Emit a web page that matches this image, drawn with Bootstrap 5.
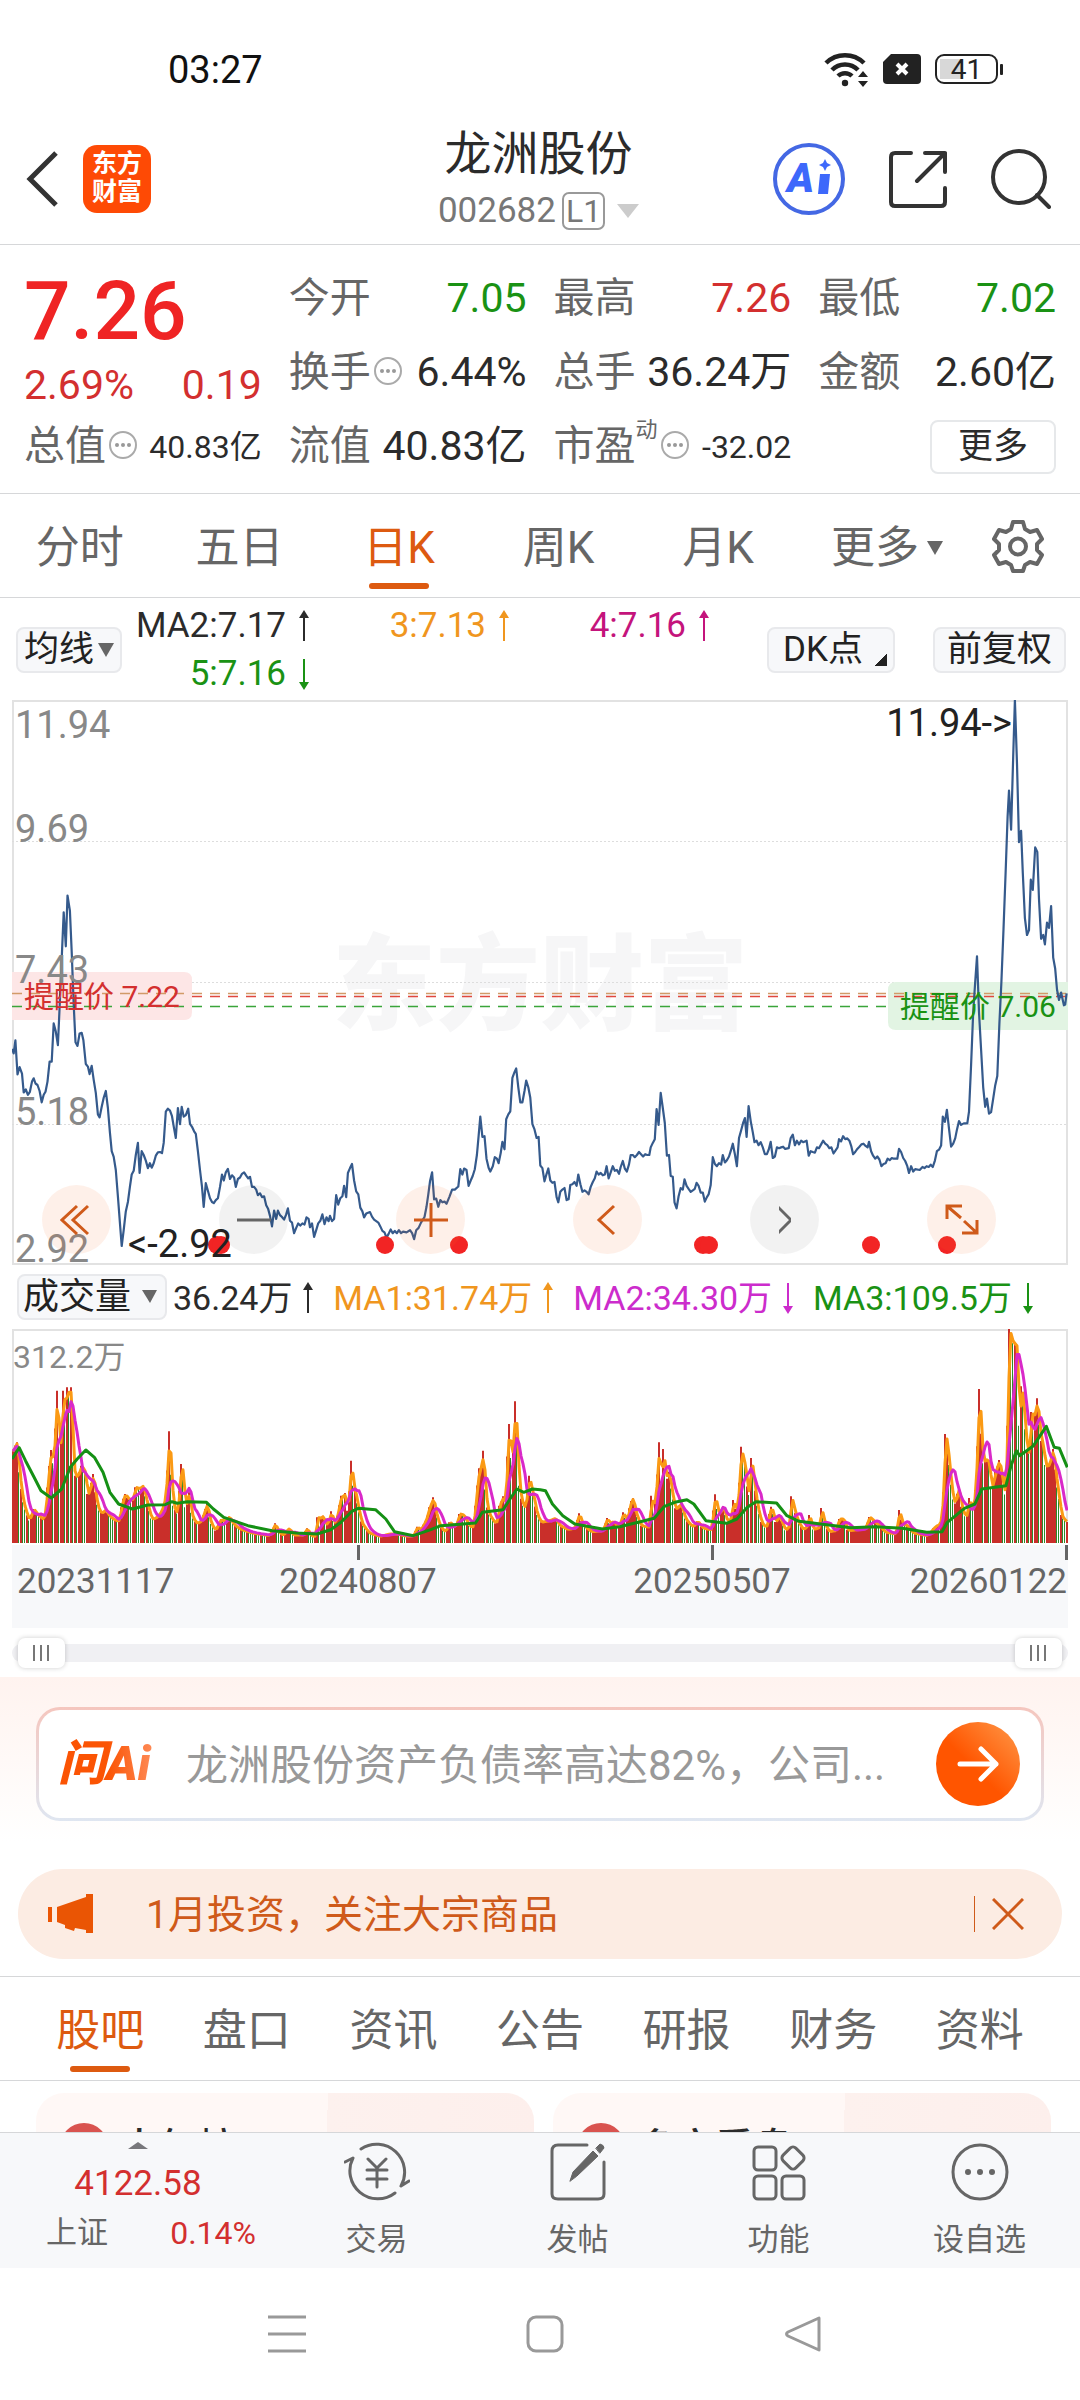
<!DOCTYPE html>
<html lang="zh-CN">
<head>
<meta charset="utf-8">
<meta name="viewport" content="width=device-width, initial-scale=1">
<title>龙洲股份 002682</title>
<link href="https://cdn.jsdelivr.net/npm/bootstrap@5.3.0/dist/css/bootstrap.min.css" rel="stylesheet">
<style>
  :root { --up:#d32f2f; --down:#1a9214; --accent:#dd5a10; --ink:#2b2b2b; --soft:#666; --rule:#d6d7d9; --panel:#f7f8fa; }
  body { font-family: Roboto, "Noto Sans CJK SC", sans-serif; color: var(--ink); background:#fff; overflow:hidden; }
  button, select { font-family: inherit; color: inherit; }
  svg { display:block; flex:none; }
  a { color: inherit; text-decoration:none; }
  .plain { border:0; background:none; padding:0; }
  .is-up { color: var(--up); } .is-down { color: var(--down); }
  .scroll-body { min-height:0; }

  .statusbar { height:112px; padding:48px 82px 0 168px; font-size:38px; line-height:44px; color:#111; }
  .status-icons { gap:14px; height:42px; }
  .battery-level { font-size:28px; line-height:27px; width:63px; height:30px; border:2px solid #222; border-radius:9px; text-align:center; background:linear-gradient(#d8d8d8,#d8d8d8) 3px 3px/22px 20px no-repeat; position:relative; color:#222; }
  .battery-level::after { content:""; position:absolute; right:-7px; top:8px; width:3px; height:11px; background:#222; border-radius:1px; }

  .apphead { padding:10px 29px 8px 26px; border-bottom:1px solid var(--rule); }
  .apphead .side { flex:1 1 0; }
  .brand-tile { width:68px; height:68px; border-radius:14px; background:#fe4a05; color:#fff; font-weight:700; font-size:25px; line-height:28px; padding-top:5px; text-align:center; }
  .stock-name { font-size:47px; line-height:64px; margin:0; font-weight:400; }
  .stock-code { font-size:35px; line-height:50px; color:#777; }
  .level-tag { border:2px solid #999; border-radius:7px; font-size:32px; line-height:34px; padding:0 2px; color:#777; }
  .gap-head { gap:44px; } .gap-brand { gap:24px; } .gap-code { gap:6px; }
  .tri { display:inline-block; width:0; height:0; border-left:8px solid transparent; border-right:8px solid transparent; border-top:14px solid var(--soft); }
  .tri-pale { border-left-width:11px; border-right-width:11px; border-top-color:#ccc; margin-left:6px; }

  .quote { padding:17px 24px 9px; gap:27px; border-bottom:1px solid var(--rule); font-size:41px; }
  .quote > div { flex:1 1 0; min-width:0; white-space:nowrap; }
  .last-price { font-size:82px; line-height:98px; font-weight:500; color:#ef2424; }
  .change-line { line-height:50px; }
  .cell { display:flex; justify-content:space-between; align-items:center; height:74px; }
  .cell dt { font-weight:400; color:var(--soft); display:flex; align-items:center; }
  .cell dt svg { margin:0 2px 4px; }
  .cell dd { margin:0; }
  .cell .sm { font-size:32px; }
  .cell sup { font-size:22px; top:-17px; }
  .more-btn { font-size:35px; line-height:50px; border:2px solid #e6e8ea; border-radius:8px; padding:0 26px; background:#fff; }

  .tabs-row { border-bottom:1px solid var(--rule); height:104px; font-size:44px; color:var(--soft); }
  .tabs-row a { flex:1 1 0; display:flex; align-items:center; justify-content:center; position:relative; white-space:nowrap; padding-top:4px; }
  .tabs-row a.on { color:var(--accent); }
  .tabs-row a.on::after { content:""; position:absolute; bottom:8px; left:50%; width:60px; margin-left:-30px; height:6px; border-radius:3px; background:var(--accent); }
  .period { padding-right:2px; }
  .period .wide { flex:0 0 178px; gap:8px; }
  .period .gear { flex:0 0 102px; justify-content:flex-start; padding:0 0 0 16px; }
  .subnav { border-top:1px solid var(--rule); padding:0 27px; height:105px; }

  .chip { height:46px; background:var(--panel); border:2px solid #e8e9ec; border-radius:8px; font-size:35px; line-height:42px; padding:0 8px; color:#222; white-space:nowrap; }
  .chip-corner { background:linear-gradient(135deg,transparent 50%,#222 50%) right 6px bottom 5px/13px 13px no-repeat var(--panel); padding:0 30px 0 14px; }
  .chip-wide { padding:0 12px; }
  .chip-ma { padding:0 6px; gap:4px; }
  .chip-gap { gap:38px; }
  .ma-row { height:102px; padding:2px 14px 0 16px; font-size:35px; line-height:48px; }
  .ma-grid { display:grid; grid-template-columns:188px 200px 200px; }
  .ma-grid span, .vol-head span { display:flex; align-items:center; justify-content:flex-end; gap:12px; white-space:nowrap; }
  .c-or { color:#f0961e; } .c-mg { color:#c4147c; } .c-pp { color:#cc2ccc; }
  .edge { margin:0 12px; }
  .edge > svg { width:100%; height:auto; }
  .chart-tools { position:absolute; left:0; right:0; bottom:11px; padding:0 72px 0 30px; display:flex; justify-content:space-between; }
  .tool { width:69px; height:69px; border-radius:50%; border:0; padding:0; display:flex; align-items:center; justify-content:center; background:rgba(247,110,40,.1); color:#cf5a1a; }
  .tool-grey { background:rgba(0,0,0,.05); color:#666; }
  .vol-head { height:64px; padding:0 46px 0 17px; font-size:34px; gap:6px; }
  .vol-head span { gap:10px; padding-top:2px; }
  .vol-head .chip { width:150px; padding:0 4px; line-height:40px; font-size:36px; appearance:none;
    background:var(--panel) url("data:image/svg+xml,%3Csvg xmlns='http://www.w3.org/2000/svg' width='15' height='14'%3E%3Cpath d='M0 0h15l-7 13z' fill='%23666'/%3E%3C/svg%3E") right 8px center no-repeat; }
  .axis-row { background:var(--panel); height:83px; margin-top:2px; }
  .zoombar { height:49px; display:flex; align-items:center; }
  .zoombar > div { display:flex; width:100%; height:18px; align-items:center; background:#f0f0f3; border-radius:9px; padding:0 6px; }
  .zoombar input { appearance:none; flex:1 1 0; min-width:0; height:30px; background:none; margin:0; }
  .zoombar input::-webkit-slider-thumb { appearance:none; width:47px; height:30px; border-radius:7px; box-shadow:0 0 5px rgba(0,0,0,.2);
    background:linear-gradient(#777,#777) 15px 7px/2px 16px no-repeat, linear-gradient(#777,#777) 22px 7px/2px 16px no-repeat, linear-gradient(#777,#777) 29px 7px/2px 16px no-repeat, #fff; }

  .ask-area { background:linear-gradient(#fff3ef,#fff 165px); padding:30px 18px 17px; }
  .ask-card { margin:0 18px 48px; height:114px; border:3px solid transparent; border-radius:24px; padding:0 21px 0 19px; gap:28px;
    background:linear-gradient(#fff,#fff) padding-box, linear-gradient(#f5c6be,#dfe6f1) border-box; }
  .ask-logo { font-size:48px; font-weight:900; font-style:italic; line-height:60px; width:100px; white-space:nowrap; background:linear-gradient(90deg,#fb5404 50%,#ff9160); -webkit-background-clip:text; color:transparent; }
  .ask-text { font-size:42px; line-height:60px; padding-top:4px; color:#999; flex:1 1 0; white-space:nowrap; }
  .ask-go { width:84px; height:84px; border-radius:50%; border:0; padding:0; display:flex; align-items:center; justify-content:center; background:linear-gradient(45deg,#ff5500 45%,#ff9a4a); }
  .notice { height:90px; border-radius:45px; background:#fcece3; color:#cf5a1a; font-size:39px; padding:0 38px 0 30px; }
  .notice .txt { margin-left:52px; padding-top:2px; }
  .notice .close-x { border-left:1px solid #cf5a1a; padding-left:17px; height:36px; display:flex; align-items:center; }

  .feed { padding:12px 29px 0 36px; gap:19px; }
  .feed-card { flex:1 1 0; border-radius:28px; height:160px; background:linear-gradient(92deg,#fff8f6 58%,#fdf1ee 58%,#fdefec); padding:30px 24px; gap:12px; font-size:39px; font-weight:500; line-height:50px; }
  .feed-dot { width:48px; height:48px; border-radius:50%; background:#d9534f; }

  .dock { background:var(--panel); border-top:1px solid var(--rule); height:136px; color:var(--soft); font-size:31px; line-height:38px; }
  .dock a { flex:1 1 0; display:flex; flex-direction:column; align-items:center; padding-top:9px; gap:19px; }
  .dock .index-box { flex:0 0 276px; gap:0; padding-top:9px; }
  .index-box .tri-up { border:10px solid transparent; border-top:0; border-bottom:7px solid #77777b; }
  .index-box b { font-size:35px; font-weight:400; line-height:42px; margin-top:14px; }
  .index-box .pair { width:100%; padding:0 20px 0 46px; font-size:32px; line-height:46px; margin-top:5px; }
  .pair span:first-child { font-size:31px; }
  .sysnav { height:132px; gap:220px; padding-left:10px; }
</style>
</head>
<body>
<div class="vh-100 d-flex flex-column">
<main class="scroll-body flex-fill overflow-hidden">

  <div class="statusbar d-flex justify-content-between align-items-start">
    <span>03:27</span>
    <div class="status-icons d-flex align-items-center">
      <svg width="45" height="36" viewBox="0 0 45 36" fill="none" stroke="#222" stroke-width="4.500"><path d="M2 12a27 27 0 0 1 38 0M8 19a18 18 0 0 1 26 0M14 25a10 10 0 0 1 14 0"/><circle cx="21" cy="32" r="3.200" fill="#222" stroke="none"/><path d="M34 26l5-6 5 6zM34 30l5 6 5-6z" fill="#222" stroke="none"/></svg>
      <svg width="38" height="30" viewBox="0 0 38 30"><path d="M8 0h26q4 0 4 4v22q0 4-4 4H4q-4 0-4-4V8z" fill="#222"/><path d="M14 10l10 10M24 10L14 20" stroke="#fff" stroke-width="4"/></svg>
      <div class="battery-level">41</div>
    </div>
  </div>

  <header class="apphead d-flex align-items-center">
    <div class="side d-flex align-items-center gap-brand">
      <button class="plain" aria-label="返回"><svg width="33" height="56" viewBox="0 0 33 56" fill="none" stroke="#333" stroke-width="5"><path d="M30 2L4 28l26 26"/></svg></button>
      <div class="brand-tile">东方<br>财富</div>
    </div>
    <div class="text-center">
      <h1 class="stock-name">龙洲股份</h1>
      <div class="stock-code gap-code d-flex align-items-center justify-content-center"><span>002682</span><span class="level-tag">L1</span><i class="tri tri-pale"></i></div>
    </div>
    <div class="side d-flex align-items-center justify-content-end gap-head">
      <a href="#" aria-label="AI"><svg width="72" height="72" viewBox="0 0 72 72"><circle cx="36" cy="36" r="34" fill="none" stroke="#4468e4" stroke-width="4"/><text x="14" y="49" font-family="Roboto" font-weight="900" font-size="41" font-style="italic" fill="#3d68fb">A</text><path d="M47 31h10l-2 20H45zM52 16l2 4 4 2-4 2-2 4-2-4-4-2 4-2z" fill="#3d68fb"/></svg></a>
      <a href="#" aria-label="分享"><svg width="58" height="58" viewBox="0 0 58 58" fill="none" stroke="#333" stroke-width="4" stroke-linecap="round" stroke-linejoin="round"><path d="M22 3H6q-4 0-4 4v45q0 4 4 4h46q4 0 4-4V38M36 3h20v19M56 3L28 31"/></svg></a>
      <a href="#" aria-label="搜索"><svg width="60" height="60" viewBox="0 0 60 60" fill="none" stroke="#333" stroke-width="4" stroke-linecap="round"><circle cx="28" cy="28" r="26"/><path d="M46 46l12 12"/></svg></a>
    </div>
  </header>

  <section class="quote d-flex">
    <div>
      <div class="last-price">7.26</div>
      <div class="change-line d-flex justify-content-between is-up"><span>2.69%</span><span>0.19</span></div>
      <dl class="cell mb-0"><dt>总值<svg width="30" height="30" viewBox="0 0 30 30"><use href="#dots"/></svg></dt><dd class="sm">40.83亿</dd></dl>
    </div>
    <div>
      <dl class="cell mb-0"><dt>今开</dt><dd class="is-down">7.05</dd></dl>
      <dl class="cell mb-0"><dt>换手<svg width="30" height="30" viewBox="0 0 30 30"><use href="#dots"/></svg></dt><dd>6.44%</dd></dl>
      <dl class="cell mb-0"><dt>流值</dt><dd>40.83亿</dd></dl>
    </div>
    <div>
      <dl class="cell mb-0"><dt>最高</dt><dd class="is-up">7.26</dd></dl>
      <dl class="cell mb-0"><dt>总手</dt><dd>36.24万</dd></dl>
      <dl class="cell mb-0"><dt>市盈<sup>动</sup><svg width="30" height="30" viewBox="0 0 30 30"><use href="#dots"/></svg></dt><dd class="sm">-32.02</dd></dl>
    </div>
    <div>
      <dl class="cell mb-0"><dt>最低</dt><dd class="is-down">7.02</dd></dl>
      <dl class="cell mb-0"><dt>金额</dt><dd>2.60亿</dd></dl>
      <div class="cell justify-content-end"><button class="more-btn">更多</button></div>
    </div>
  </section>

  <nav class="tabs-row period d-flex">
    <a href="#">分时</a><a href="#">五日</a><a href="#" class="on">日K</a><a href="#">周K</a><a href="#">月K</a>
    <a href="#" class="wide">更多<i class="tri"></i></a>
    <a href="#" class="gear" aria-label="设置"><svg width="52" height="54" viewBox="0 0 52 54" fill="none" stroke="#666" stroke-width="4" stroke-linejoin="round"><path d="M21 3h10l2 7 5 3 7-2 5 9-5 5v6l5 5-5 9-7-2-5 3-2 6H21l-2-6-5-3-7 2-5-9 5-5v-6l-5-5 5-9 7 2 5-3z"/><circle cx="26" cy="27.500" r="8"/></svg></a>
  </nav>

  <div class="ma-row d-flex align-items-center">
    <button class="chip chip-ma d-flex align-items-center">均线<i class="tri"></i></button>
    <div class="ma-grid">
      <span>MA2:7.17<svg width="12" height="32" fill="currentColor"><use href="#arr"/></svg></span>
      <span class="c-or">3:7.13<svg width="12" height="32" fill="currentColor"><use href="#arr"/></svg></span>
      <span class="c-mg">4:7.16<svg width="12" height="32" fill="currentColor"><use href="#arr"/></svg></span>
      <span class="is-down">5:7.16<svg width="12" height="32" fill="currentColor"><use href="#arrd"/></svg></span>
    </div>
    <div class="d-flex ms-auto chip-gap">
      <button class="chip chip-corner">DK点</button>
      <button class="chip chip-wide">前复权</button>
    </div>
  </div>

  <div class="edge position-relative">
    <svg viewBox="0 0 1056 565" id="price" font-size="38" fill="#888">
      <text x="320" y="322" font-size="104" font-weight="900" fill="#f6f6f7">东方财富</text>
      <rect x="1" y="1" width="1054" height="563" fill="none" stroke="#e2e2e2" stroke-width="2"/>
      <path d="M0 141.500h1056M0 282.500h1056M0 424.500h1056" stroke="#ddd" stroke-dasharray="2 2" fill="none"/>
      <path d="M0 272h172q8 0 8 8v32q0 8-8 8H0z" fill="#fde6e6"/>
      <path d="M1056 282H884q-8 0-8 8v32q0 8 8 8h172z" fill="#e2f4e3"/>
      <g fill="none" stroke-width="1.500" stroke-dasharray="10 8"><path d="M0 293.500h1056" stroke="#d29a68"/><path d="M180 296.500h876" stroke="#e0483e"/><path d="M0 306.500h876" stroke="#3aa53a"/></g>
      <polyline id="priceLine" fill="none" stroke="#355a8c" stroke-width="2.200" stroke-linejoin="round"/>
      <text x="3" y="38">11.94</text><text x="3" y="142">9.69</text><text x="3" y="283">7.43</text><text x="3" y="425">5.18</text><text x="3" y="562">2.92</text>
      <g fill="#f22424"><circle cx="205" cy="545" r="9"/><circle cx="209" cy="545" r="9"/><circle cx="373" cy="545" r="9"/><circle cx="447" cy="545" r="9"/><circle cx="691" cy="545" r="9"/><circle cx="697" cy="545" r="9"/><circle cx="859" cy="545" r="9"/><circle cx="935" cy="545" r="9"/></g>
      <g fill="#222"><text x="1000" y="36" text-anchor="end">11.94-&gt;</text><text x="116" y="557">&lt;-2.92</text></g>
      <text x="12" y="307" font-size="30" fill="#d32f2f">提醒价 7.22</text>
      <text x="888" y="317" font-size="30" fill="#1a9214">提醒价 7.06</text>
    </svg>
    <div class="chart-tools">
      <button class="tool" aria-label="快退"><svg width="34" height="32" fill="none" stroke="currentColor" stroke-width="3"><path d="M17 2L2 16l15 14M28 2L13 16l15 14"/></svg></button>
      <button class="tool tool-grey" aria-label="缩小"><svg width="34" height="32" stroke="currentColor" stroke-width="3"><path d="M0 16h34"/></svg></button>
      <button class="tool" aria-label="放大"><svg width="34" height="34" stroke="currentColor" stroke-width="3"><path d="M0 17h34M17 0v34"/></svg></button>
      <button class="tool" aria-label="左移"><svg width="24" height="32" fill="none" stroke="currentColor" stroke-width="3"><path d="M18 2L3 16l15 14"/></svg></button>
      <button class="tool tool-grey" aria-label="右移"><svg width="12" height="32" fill="none" stroke="currentColor" stroke-width="3"><path d="M0 2l14 14L0 30" transform="translate(-2)"/></svg></button>
      <button class="tool" aria-label="全屏"><svg width="34" height="32" fill="none" stroke="currentColor" stroke-width="3"><path d="M17 2H2v13M2 2l14 12M17 29h15V16M32 29L19 17"/></svg></button>
    </div>
  </div>

  <div class="vol-head d-flex align-items-center">
    <select class="chip" aria-label="副图指标"><option>成交量</option></select>
    <div class="d-flex flex-fill justify-content-between">
      <span>36.24万<svg width="12" height="32" fill="currentColor"><use href="#arr"/></svg></span>
      <span class="c-or">MA1:31.74万<svg width="12" height="32" fill="currentColor"><use href="#arr"/></svg></span>
      <span class="c-pp">MA2:34.30万<svg width="12" height="32" fill="currentColor"><use href="#arrd"/></svg></span>
      <span class="is-down">MA3:109.5万<svg width="12" height="32" fill="currentColor"><use href="#arrd"/></svg></span>
    </div>
  </div>

  <div class="edge">
    <svg viewBox="0 0 1056 214" id="volume">
      <path d="M1 214V1h1054v213" fill="none" stroke="#e2e2e2" stroke-width="2"/>
      <text x="1" y="39" font-size="32" fill="#888">312.2万</text>
      <path id="barsUp" fill="#c92f2a"/><path id="barsGap" fill="#fff"/><path id="barsDown" fill="#2b8c2b"/>
      <g fill="none" stroke-width="3" stroke-linejoin="round"><polyline id="ma1" stroke="#fb9a14"/><polyline id="ma2" stroke="#d929c9"/><polyline id="ma3" stroke="#159015"/></g>
    </svg>
    <div class="axis-row"><svg viewBox="0 0 1056 83" width="100%" font-size="35" fill="#666"><path d="M345 0h3v15h-3zM699 0h3v15h-3zM1053 0h3v15h-3z"/><text x="5" y="48">20231117</text><text x="346" y="48" text-anchor="middle">20240807</text><text x="700" y="48" text-anchor="middle">20250507</text><text x="1055" y="48" text-anchor="end">20260122</text></svg></div>
    <div class="zoombar"><div><input type="range" value="0" aria-label="起始日期"><input type="range" value="100" aria-label="结束日期"></div></div>
  </div>

  <section class="ask-area">
    <div class="ask-card d-flex align-items-center">
      <span class="ask-logo">问Ai</span>
      <span class="ask-text">龙洲股份资产负债率高达82%，公司...</span>
      <button class="ask-go" aria-label="提问"><svg width="42" height="38" fill="none" stroke="#fff" stroke-width="5" stroke-linecap="round" stroke-linejoin="round"><path d="M3 19h36M24 4l15 15-15 15"/></svg></button>
    </div>
    <div class="notice d-flex align-items-center">
      <svg width="46" height="40" fill="#ea5504"><path d="M0 13h4v15H0zM9 13l29-10V0h7v39h-7v-3l-11-2-1 3-9-3v-3l-8-3z"/></svg>
      <span class="txt">1月投资，关注大宗商品</span>
      <button class="plain close-x ms-auto" aria-label="关闭"><svg width="32" height="32" stroke="#cf5a1a" stroke-width="3"><path d="M1 1l30 30M31 1L1 31"/></svg></button>
    </div>
  </section>

  <nav class="tabs-row subnav d-flex">
    <a href="#" class="on">股吧</a><a href="#">盘口</a><a href="#">资讯</a><a href="#">公告</a><a href="#">研报</a><a href="#">财务</a><a href="#">资料</a>
  </nav>
  <div class="feed d-flex">
    <div class="feed-card d-flex"><i class="feed-dot"></i>人气榜</div>
    <div class="feed-card d-flex"><i class="feed-dot"></i>多空看盘</div>
  </div>
</main>

<footer class="flex-shrink-0">
  <nav class="dock d-flex">
    <a href="#" class="index-box"><i class="tri-up"></i><b class="is-up">4122.58</b><div class="pair d-flex justify-content-between"><span>上证</span><span class="is-up">0.14%</span></div></a>
    <a href="#"><svg width="66" height="60" fill="none" stroke="#666" stroke-width="3" stroke-linecap="round" stroke-linejoin="round"><path d="M17 7A28 28 0 0 1 57 44l8-5M51 51A28 28 0 0 1 9 16l-8 4M24 17l9 9 9-9M33 26v19M23 28h20M23 37h20"/></svg>交易</a>
    <a href="#"><svg width="56" height="60" fill="none" stroke="#666" stroke-width="3" stroke-linecap="round"><path d="M37 3H8q-6 0-6 6v43q0 5 6 5h40q6 0 6-5V20"/><path d="M20 39l3-9 20-21 5 5-21 20zM46 6l4-4q4 1 4 4l-4 5z" fill="#666" stroke-width="1"/></svg>发帖</a>
    <a href="#"><svg width="54" height="60" fill="none" stroke="#666" stroke-width="3"><rect x="2" y="5" width="22" height="23" rx="4"/><rect x="2" y="34" width="22" height="23" rx="4"/><rect x="30" y="34" width="22" height="23" rx="4"/><rect x="32" y="7" width="18" height="18" rx="4" transform="rotate(45 41 16)"/></svg>功能</a>
    <a href="#"><svg width="60" height="60" fill="none" stroke="#666" stroke-width="3"><circle cx="30" cy="30" r="27"/><g fill="#666" stroke="none"><circle cx="18" cy="30" r="3"/><circle cx="30" cy="30" r="3"/><circle cx="42" cy="30" r="3"/></g></svg>设自选</a>
  </nav>
  <div class="sysnav d-flex justify-content-center align-items-center">
    <button class="plain" aria-label="最近任务"><svg width="38" height="38" stroke="#999" stroke-width="3"><path d="M0 2h38M0 19h38M0 36h38"/></svg></button>
    <button class="plain" aria-label="主屏幕"><svg width="38" height="38" fill="none" stroke="#999" stroke-width="3"><rect x="2" y="2" width="34" height="34" rx="8"/></svg></button>
    <button class="plain" aria-label="返回上级"><svg width="38" height="38" fill="none" stroke="#999" stroke-width="3" stroke-linejoin="round"><path d="M35 3v32L4 21q-3-2 0-4z"/></svg></button>
  </div>
</footer>
</div>

<svg width="0" height="0" class="position-absolute">
  <defs>
    <g id="dots"><circle cx="15" cy="15" r="13" fill="none" stroke="#aaa" stroke-width="2"/><g fill="#999"><circle cx="9" cy="15" r="2"/><circle cx="15" cy="15" r="2"/><circle cx="21" cy="15" r="2"/></g></g>
    <g id="arr"><path d="M6 0l5 8H7v23H5V8H1z"/></g>
    <g id="arrd"><path d="M6 32l5-8H7V1H5v23H1z"/></g>
  </defs>
</svg>

<script src="https://cdn.jsdelivr.net/npm/bootstrap@5.3.0/dist/js/bootstrap.bundle.min.js"></script>
<script>
  // Series are digitised in two halves; the second half starts 1568 units after the first.
  const HALF = 1568, LEFT = 36, SX = 1056 / 3062;
  const parse = (s, off) => s.trim().split(/\s+/).map(p => p.split(',').map(Number)).map(([x, y]) => [(x + off - LEFT) * SX, y]);
  const series = (a, b) => parse(a, 0).concat(parse(b, HALF));

  const price = series(`36,958 41,970 46,935 52,1026 58,1006 65,1024 70,1074 76,1066 82,1080 88,1072 94,1045 99,1036 104,1050 110,1054 116,1070 122,1100 128,1080 133,1072 139,1045 145,992 151,992 157,890 163,912 169,948 175,830 181,700 186,595 192,685 197,550 204,590 209,700 215,840 220,940 226,950 232,917 238,915 243,935 250,998 256,1005 261,1025 267,1003 273,1040 279,1075 285,1132 290,1140 296,1112 302,1088 308,1070 314,1115 320,1180 325,1230 331,1245 337,1280 343,1350 349,1420 354,1482 360,1440 366,1390 372,1365 378,1325 383,1292 389,1282 395,1240 401,1208 406,1288 412,1230 418,1240 424,1255 430,1275 436,1262 441,1274 447,1262 453,1242 459,1233 465,1232 471,1235 476,1208 482,1125 488,1117 494,1122 500,1137 506,1170 511,1195 517,1115 523,1158 528,1112 534,1138 540,1134 547,1117 552,1157 558,1165 564,1177 569,1184 575,1230 581,1280 587,1325 592,1378 598,1315 604,1335 610,1355 616,1365 621,1368 627,1360 633,1355 639,1325 645,1292 650,1308 656,1286 662,1277 668,1304 674,1294 680,1300 685,1325 691,1304 697,1300 703,1290 709,1286 715,1295 721,1302 726,1298 732,1325 738,1325 744,1332 749,1347 755,1342 761,1352 767,1350 773,1374 779,1384 784,1402 790,1430 796,1388 802,1410 807,1388 813,1400 819,1405 825,1412 831,1398 836,1382 842,1415 848,1420 854,1448 860,1434 866,1422 872,1428 878,1422 884,1425 890,1406 896,1410 900,1432 906,1422 912,1458 918,1440 924,1422 930,1415 936,1398 942,1424 948,1406 954,1416 958,1402 964,1416 970,1410 976,1347 982,1372 988,1355 994,1350 999,1322 1005,1352 1010,1288 1016,1275 1022,1264 1028,1308 1034,1337 1040,1345 1046,1380 1052,1390 1057,1406 1063,1396 1074,1392 1080,1404 1086,1412 1092,1416 1098,1420 1104,1430 1110,1442 1116,1446 1122,1460 1128,1450 1134,1438 1140,1448 1146,1442 1152,1448 1158,1440 1164,1448 1170,1444 1180,1446 1190,1440 1196,1448 1202,1464 1208,1440 1215,1434 1222,1420 1232,1405 1238,1378 1243,1345 1248,1310 1254,1286 1260,1358 1266,1356 1272,1378 1278,1360 1284,1366 1290,1364 1296,1370 1304,1352 1312,1332 1320,1332 1330,1324 1336,1278 1342,1292 1347,1276 1354,1280 1360,1322 1366,1308 1372,1296 1378,1278 1384,1240 1389,1190 1394,1138 1400,1192 1406,1190 1412,1250 1418,1274 1423,1284 1430,1270 1436,1246 1442,1250 1447,1262 1453,1235 1458,1205 1464,1225 1469,1145 1475,1132 1481,1124 1487,1035 1493,1020 1498,1010 1504,1060 1510,1100 1516,1100 1522,1070 1527,1042 1533,1060 1539,1088 1545,1158 1551,1172 1557,1195 1563,1192`,
  `0,1268 6,1275 12,1310 18,1290 23,1276 29,1308 35,1314 41,1312 47,1352 52,1366 58,1338 64,1332 70,1328 76,1360 82,1358 87,1320 93,1318 99,1312 105,1322 110,1292 116,1318 122,1338 128,1334 134,1338 140,1345 146,1325 152,1312 158,1302 163,1284 169,1292 175,1288 181,1294 187,1292 192,1270 198,1302 204,1286 210,1270 216,1282 222,1280 228,1290 233,1272 239,1256 245,1276 251,1284 257,1265 262,1240 268,1240 274,1246 280,1240 286,1232 292,1238 298,1244 304,1238 310,1240 316,1240 320,1220 326,1208 332,1198 337,1118 343,1160 349,1075 355,1115 361,1155 367,1242 373,1240 378,1296 384,1298 389,1366 395,1382 401,1350 407,1328 413,1332 418,1305 424,1322 430,1330 436,1338 442,1334 448,1330 453,1314 459,1322 465,1340 471,1340 477,1364 483,1352 488,1345 494,1320 500,1246 506,1264 512,1270 518,1262 524,1266 529,1240 535,1260 541,1254 547,1244 552,1230 558,1210 564,1238 570,1270 576,1195 582,1175 588,1155 593,1142 598,1192 604,1110 610,1150 616,1180 621,1206 627,1202 633,1214 639,1206 645,1220 651,1238 657,1238 662,1226 668,1205 674,1248 680,1244 686,1220 692,1222 698,1220 704,1218 710,1224 720,1222 726,1195 732,1186 738,1214 744,1202 750,1212 756,1202 762,1206 772,1202 778,1242 784,1230 790,1232 796,1234 802,1220 808,1222 814,1212 820,1202 826,1210 832,1214 838,1222 844,1220 850,1236 856,1228 862,1220 866,1198 872,1204 878,1190 884,1198 890,1196 896,1202 902,1218 907,1238 913,1232 919,1224 925,1218 931,1212 937,1210 943,1216 949,1220 953,1205 959,1230 965,1242 971,1250 977,1244 983,1252 989,1270 995,1264 1001,1262 1007,1250 1013,1254 1019,1248 1025,1250 1035,1250 1040,1224 1046,1232 1052,1248 1058,1256 1064,1270 1069,1288 1075,1270 1081,1284 1087,1278 1100,1280 1108,1272 1114,1275 1120,1270 1126,1272 1132,1266 1138,1272 1144,1255 1150,1230 1156,1226 1162,1215 1167,1138 1173,1152 1179,1120 1185,1170 1191,1218 1197,1210 1203,1196 1208,1172 1214,1150 1220,1160 1228,1156 1238,1156 1243,1125 1249,1000 1255,860 1261,780 1266,712 1272,860 1278,960 1284,1060 1290,1112 1295,1090 1301,1130 1307,1126 1313,1090 1319,1055 1325,1030 1331,890 1337,780 1343,640 1349,490 1355,340 1359,271 1365,375 1371,180 1376,30 1382,200 1388,408 1394,378 1399,490 1405,610 1411,655 1417,642 1422,508 1428,535 1435,422 1441,434 1446,560 1452,665 1458,655 1463,680 1469,622 1475,636 1481,578 1487,715 1493,745 1498,800 1504,828 1510,808 1518,842 1522,840 1526,810`);
  const draw = (id, pts) => document.getElementById(id).setAttribute('points', pts.map(p => p[0].toFixed(1) + ',' + p[1].toFixed(1)).join(' '));
  draw('priceLine', price.map(([x, y]) => [x, (y - 30) * 564 / 1500]));

  const vol = series(`36,585 48,550 54,640 60,690 70,740 85,785 97,750 110,768 130,785 136,700 141,650 147,573 153,620 158,600 164,395 170,560 176,620 182,395 188,480 193,385 198,440 205,385 210,620 216,650 224,655 238,620 245,640 258,740 262,700 268,645 275,700 285,750 296,765 305,752 320,775 345,790 352,745 361,705 372,720 385,725 395,685 405,690 413,680 424,720 440,782 455,775 465,765 474,740 477,715 483,715 489,517 494,590 502,740 515,765 520,700 525,615 531,650 538,750 548,700 556,770 570,795 585,785 600,735 610,790 625,815 640,780 652,790 663,773 680,800 700,812 730,822 780,830 790,815 797,793 805,815 820,830 837,808 850,828 880,828 890,808 900,830 915,832 923,775 930,780 936,770 945,800 953,790 960,757 970,800 980,770 988,710 994,720 1000,702 1008,760 1013,700 1018,605 1024,680 1032,700 1040,760 1050,795 1070,822 1100,832 1130,825 1150,825 1180,832 1200,830 1209,803 1220,815 1230,797 1240,770 1248,745 1256,715 1264,760 1275,800 1290,820 1305,790 1320,805 1335,765 1345,768 1360,800 1372,808 1380,740 1388,628 1394,650 1401,575 1408,700 1415,760 1430,785 1440,797 1450,740 1459,712 1465,750 1470,620 1476,495 1482,600 1488,580 1494,427 1500,560 1506,680 1515,740 1525,745 1534,650 1540,690 1548,710 1555,760`,
  `0,790 25,785 42,778 55,800 80,812 100,805 112,763 120,795 145,818 180,815 193,777 200,795 212,787 222,805 232,790 240,760 250,790 260,730 268,718 275,760 290,800 315,805 321,710 327,745 333,720 338,650 345,550 350,680 355,570 361,640 367,660 374,638 380,700 392,755 405,735 420,780 440,805 455,787 470,808 495,812 500,760 506,706 515,770 530,742 540,790 552,780 560,723 568,770 575,690 582,563 588,610 595,618 603,740 612,597 618,660 628,740 640,790 655,810 663,765 670,743 680,790 692,772 710,815 722,800 728,712 735,750 745,785 760,812 772,805 779,768 790,812 808,805 815,747 822,790 835,818 855,815 866,780 880,780 890,815 920,812 940,810 954,774 965,785 980,800 1000,820 1030,825 1036,800 1041,753 1048,795 1062,800 1080,822 1120,830 1140,808 1150,798 1160,800 1168,700 1174,525 1180,560 1186,630 1192,690 1200,745 1212,685 1220,745 1235,780 1245,717 1252,770 1260,700 1265,590 1273,390 1279,560 1285,630 1290,600 1300,610 1308,700 1318,640 1331,603 1338,660 1350,720 1355,500 1360,210 1367,250 1374,255 1380,265 1385,560 1390,500 1396,382 1402,450 1408,560 1416,600 1424,459 1432,480 1441,418 1448,530 1455,560 1465,630 1475,615 1487,570 1493,640 1502,720 1510,770 1520,785 1530,790`);
  const at = (pts, x) => { let i = 1; while (i < pts.length - 1 && pts[i][0] < x) i++; const [a, b] = [pts[i - 1], pts[i]]; return a[1] + (b[1] - a[1]) * Math.max(0, Math.min(1, (x - a[0]) / (b[0] - a[0]))); };
  const toY = y => (y - 210) / 3;
  const bars = [];
  for (let x = 1; x < 1056; x += 2) {
    const peaks = vol.filter(p => Math.abs(p[0] - x) < 1).map(p => p[1]);
    bars.push([x, toY(Math.min(at(vol, x), ...peaks))]);
  }
  let up = '', down = '', gap = '';
  bars.forEach(([x, y], i) => {
    const falling = i > 1 && y > bars[i - 1][1] + 0.2;
    if (falling && (i * 7) % 10 < 7) {
      down += `M${x - 1} ${y.toFixed(1)}h1V214h-1z`;
      gap += `M${x} ${y.toFixed(1)}h1V214h-1z`;
    } else up += `M${x - 1} ${y.toFixed(1)}h2V214h-2z`;
  });
  document.getElementById('barsUp').setAttribute('d', up);
  document.getElementById('barsGap').setAttribute('d', gap);
  document.getElementById('barsDown').setAttribute('d', down);
  const mean = n => bars.map(([x], i) => { const w = bars.slice(Math.max(0, i - n + 1), i + 1); return [x, w.reduce((s, p) => s + p[1], 0) / w.length]; });
  draw('ma1', mean(2)); draw('ma2', mean(6));
  draw('ma3', series(`36,600 57,566 75,605 100,655 120,695 150,717 180,690 205,625 225,600 250,573 275,595 300,640 320,700 345,735 385,750 430,738 480,737 500,728 515,733 545,728 600,730 620,750 650,775 720,800 790,815 860,822 920,825 960,812 990,790 1020,758 1040,748 1090,752 1120,780 1145,818 1200,830 1250,812 1280,800 1380,792 1400,760 1460,752 1480,720 1500,690 1520,700 1545,690`,
  `0,692 15,695 35,735 65,770 100,795 180,810 230,803 290,788 330,778 360,742 390,730 425,722 445,735 480,785 540,793 570,780 600,745 625,728 685,732 715,770 750,787 830,797 900,806 970,803 1050,808 1120,820 1165,818 1180,790 1230,748 1260,735 1280,690 1350,680 1365,620 1380,575 1390,590 1430,560 1467,502 1490,565 1505,568 1528,625`).map(([x, y]) => [x, toY(y)]));
</script>
</body>
</html>
